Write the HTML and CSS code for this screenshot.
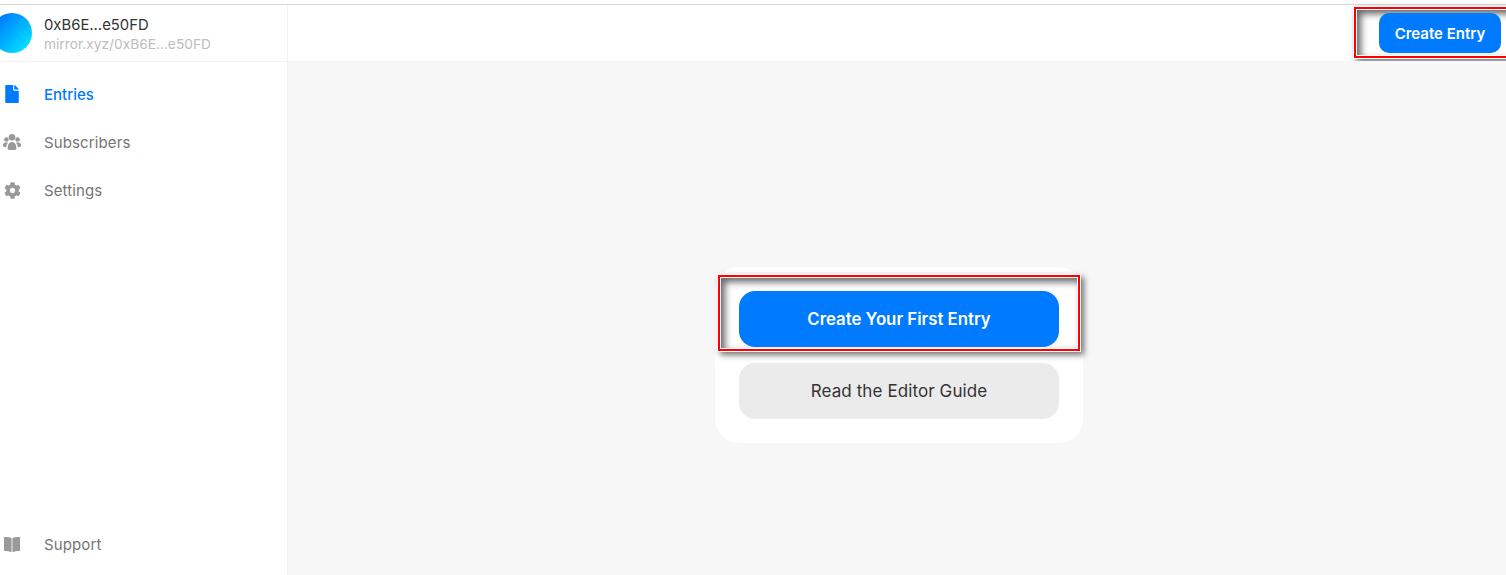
FILE: index.html
```html
<!DOCTYPE html>
<html lang="en">
<head>
<meta charset="utf-8">
<title>Entries</title>
<link rel="stylesheet" href="styles.css">
</head>
<body>
<div class="app">
  <aside class="sidebar">
    <div class="profile">
      <div class="avatar"></div>
      <div class="profile-text">
        <div class="profile-name">0xB6E...e50FD</div>
        <div class="profile-url">mirror.xyz/0xB6E...e50FD</div>
      </div>
    </div>
    <nav class="nav">
      <a class="nav-item active">
        <span class="icon-slot">
          <svg class="icon-file" viewBox="0 0 384 512"><path d="M224 136V0H24C10.700 0 0 10.700 0 24v464c0 13.300 10.700 24 24 24h336c13.300 0 24-10.700 24-24V160H248c-13.200 0-24-10.800-24-24zm160-14.100v6.100H256V0h6.100c6.400 0 12.500 2.500 17 7l97.900 98c4.500 4.500 7 10.600 7 16.900z"/></svg>
        </span>
        <span>Entries</span>
      </a>
      <a class="nav-item">
        <span class="icon-slot">
          <svg class="icon-users" viewBox="0 0 18 16"><circle cx="9" cy="3.300" r="3.300"/><circle cx="3.400" cy="5.500" r="2.300"/><circle cx="14.600" cy="5.500" r="2.300"/><path d="M4.700 14.200c0-3.300 1.500-6.200 4.300-6.200s4.300 2.900 4.300 6.200c0 1-.8 1.800-1.800 1.800h-5c-1 0-1.800-.8-1.800-1.800z"/><path d="M0 11c0-1.500 1-2.600 2.400-2.600h1.700c.4 0 .7.100 1 .3-1.100 1-1.700 2.500-1.900 4.300H1.200C.5 13 0 12.500 0 11.800zM18 11c0-1.500-1-2.600-2.400-2.600h-1.700c-.4 0-.7.100-1 .3 1.100 1 1.700 2.500 1.900 4.300h2c.7 0 1.200-.5 1.200-1.200z"/></svg>
        </span>
        <span>Subscribers</span>
      </a>
      <a class="nav-item">
        <span class="icon-slot">
          <svg class="icon-gear" viewBox="0 0 512 512"><path d="M487.400 315.700l-42.600-24.600c4.300-23.200 4.300-47 0-70.200l42.600-24.600c4.900-2.800 7.100-8.600 5.500-14-11.100-35.600-30-67.800-54.700-94.600-3.800-4.100-10-5.100-14.800-2.300L380.800 110c-17.900-15.400-38.500-27.300-60.800-35.100V25.800c0-5.600-3.900-10.500-9.400-11.700-36.700-8.200-74.300-7.800-109.200 0-5.500 1.200-9.400 6.100-9.400 11.700V75c-22.200 7.900-42.800 19.800-60.800 35.100L88.700 85.500c-4.900-2.800-11-1.900-14.800 2.300-24.700 26.700-43.600 58.900-54.700 94.600-1.700 5.400.6 11.200 5.500 14L67.300 221c-4.300 23.200-4.300 47 0 70.200l-42.600 24.600c-4.900 2.800-7.100 8.600-5.500 14 11.100 35.600 30 67.800 54.700 94.600 3.800 4.100 10 5.100 14.800 2.300l42.600-24.600c17.900 15.400 38.500 27.300 60.800 35.100v49.200c0 5.600 3.900 10.500 9.400 11.700 36.700 8.200 74.300 7.800 109.200 0 5.500-1.200 9.400-6.100 9.400-11.700v-49.200c22.200-7.900 42.800-19.800 60.800-35.100l42.600 24.600c4.900 2.800 11 1.900 14.800-2.300 24.700-26.700 43.600-58.900 54.700-94.600 1.500-5.500-.7-11.300-5.600-14.100zM256 336c-44.100 0-80-35.900-80-80s35.900-80 80-80 80 35.900 80 80-35.900 80-80 80z"/></svg>
        </span>
        <span>Settings</span>
      </a>
    </nav>
    <a class="nav-item support">
      <span class="icon-slot">
        <svg class="icon-book" viewBox="0 0 16 15"><path d="M0 1c0-.6.500-1 1-1 2.700 0 5 .3 6.200 1 .3.200.4.400.4.700v12.600c0 .5-.5.800-1 .6-1.500-.6-3.500-.9-5.600-.9-.6 0-1-.4-1-1z"/><path d="M16 1c0-.6-.5-1-1-1-2.700 0-5 .3-6.200 1-.3.200-.4.400-.4.700v12.600c0 .5.500.8 1 .6 1.500-.6 3.500-.9 5.600-.9.600 0 1-.4 1-1z"/></svg>
      </span>
      <span>Support</span>
    </a>
  </aside>
  <div class="main">
    <header class="topbar">
      <div class="highlight topbar-highlight">
        <button class="btn btn-primary btn-small">Create Entry</button>
      </div>
    </header>
    <main class="content">
      <div class="card">
        <div class="highlight card-highlight">
          <button class="btn btn-primary btn-large">Create Your First Entry</button>
        </div>
        <button class="btn btn-secondary btn-large">Read the Editor Guide</button>
      </div>
    </main>
  </div>
</div>
</body>
</html>
```
FILE: styles.css
```css
* { box-sizing: border-box; }
html, body { margin: 0; height: 100%; overflow: hidden; }
body {
  font-family: Inter, "Liberation Sans", sans-serif;
  background: #fff;
  padding-top: 4px;
}
.app {
  display: flex;
  height: 571px;
  border-top: 1px solid #d9d9d9;
}
.sidebar {
  width: 288px;
  flex: none;
  display: flex;
  flex-direction: column;
  border-right: 1px solid #f2f2f2;
}
.profile {
  height: 57px;
  display: flex;
  align-items: center;
  gap: 12px;
  border-bottom: 1px solid #f2f2f2;
}
.avatar {
  width: 40px;
  height: 40px;
  flex: none;
  margin-left: -8px;
  border-radius: 50%;
  background: linear-gradient(135deg, #0074ff 10%, #00e5ff 90%);
}
.profile-text { padding-top: 2px; }
.profile-name { font-size: 14.850px; line-height: 20px; color: #333; }
.profile-url { font-size: 13.750px; line-height: 18px; color: #bdbdbd; }
.nav {
  flex: 1;
  display: flex;
  flex-direction: column;
  gap: 16px;
  padding-top: 16px;
}
.nav-item {
  display: flex;
  align-items: center;
  gap: 20px;
  height: 32px;
  font-size: 15px;
  font-weight: 400;
  letter-spacing: .12px;
  color: #757575;
}
.nav-item.active { color: #007aff; font-weight: 500; letter-spacing: 0; }
.icon-slot {
  width: 24px;
  height: 24px;
  flex: none;
  display: flex;
  align-items: center;
  justify-content: center;
}
.icon-slot svg { fill: #999; display: block; }
.active .icon-slot svg { fill: #007aff; }
.icon-file { width: 14px; height: 18px; }
.icon-users { width: 18px; height: 16px; }
.icon-gear { width: 17px; height: 17px; }
.icon-book { width: 16px; height: 15px; }
.support { margin-bottom: 15px; }
.main {
  flex: 1;
  min-width: 0;
  display: flex;
  flex-direction: column;
}
.topbar {
  height: 56px;
  flex: none;
  display: flex;
  justify-content: flex-end;
  align-items: flex-start;
  background: #fff;
}
.content {
  flex: 1;
  background: #f7f7f7;
  display: flex;
  justify-content: center;
  align-items: flex-start;
  padding-top: 206px;
  padding-left: 4px;
}
.card {
  width: 368px;
  background: #fff;
  border-radius: 24px;
  padding: 24px;
  display: flex;
  flex-direction: column;
  align-items: center;
}
.highlight {
  display: flex;
  background: #fff;
  border: 1px solid #fff;
  box-shadow:
    0 0 0 2px #ff0000,
    0 0 0 3px #fff,
    3px 3px 6px 3px rgba(0,0,0,.55),
    inset 4px 4px 7px 0 rgba(0,0,0,.6);
}
.card-highlight {
  padding: 13px 18px 1px;
  margin: -14px 0 14px;
}
.topbar-highlight {
  padding: 3px 14px 2px 22px;
  margin: 4px -10px 0 0;
}
.btn {
  border: 0;
  font-family: inherit;
  cursor: pointer;
}
.btn-primary { background: #007aff; color: #fff; font-weight: 600; }
.btn-secondary { background: #ebebeb; color: #333; font-weight: 400; letter-spacing: .1px; }
.btn-large { width: 320px; height: 56px; border-radius: 16px; font-size: 16.800px; }
.btn-secondary.btn-large { font-size: 17px; }
.btn-small { width: 122px; height: 40px; border-radius: 10px; font-size: 15px; }
```
